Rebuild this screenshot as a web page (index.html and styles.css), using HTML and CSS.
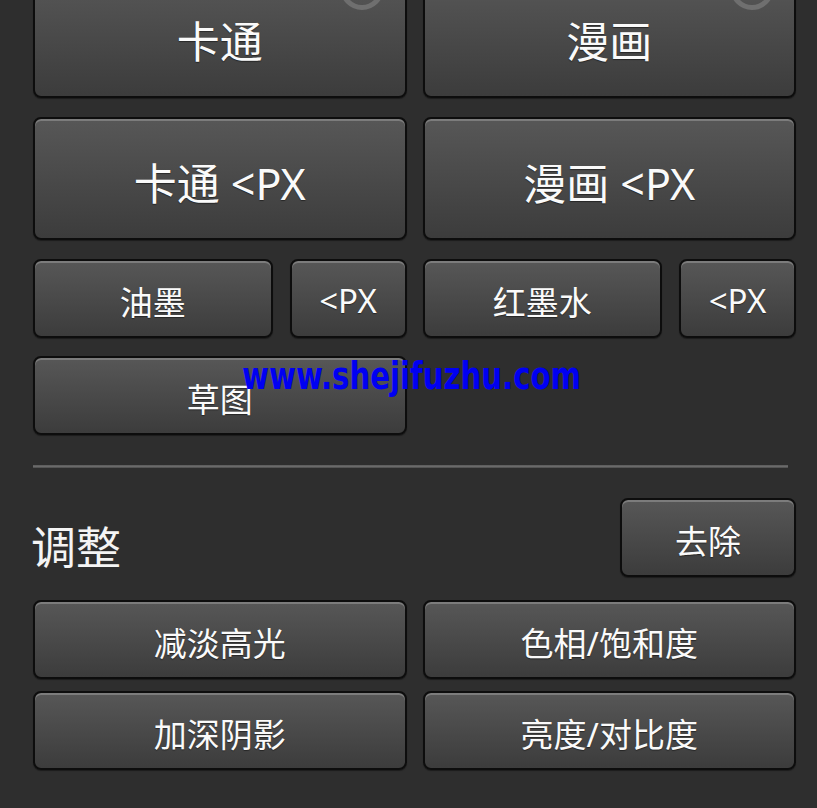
FILE: index.html
```html
<!DOCTYPE html>
<html lang="zh-CN">
<head>
<meta charset="utf-8">
<title>滤镜面板</title>
<link rel="stylesheet" href="styles.css">
</head>
<body>
<div class="panel">
  <div class="grid big">
    <button class="btn xl">卡通<svg class="ring" width="60" height="50" viewBox="0 0 60 50"><circle cx="30" cy="14" r="19.5" fill="none" stroke="#6f6f6f" stroke-width="5"/></svg></button>
    <button class="btn xl">漫画<svg class="ring" width="60" height="50" viewBox="0 0 60 50"><circle cx="30" cy="14" r="19.5" fill="none" stroke="#6f6f6f" stroke-width="5"/></svg></button>
    <button class="btn xl">卡通 &lt;PX</button>
    <button class="btn xl">漫画 &lt;PX</button>
  </div>
  <div class="grid small">
    <div class="pair">
      <button class="btn md">油墨</button>
      <button class="btn md">&lt;PX</button>
    </div>
    <div class="pair">
      <button class="btn md">红墨水</button>
      <button class="btn md">&lt;PX</button>
    </div>
    <button class="btn md">草图</button>
  </div>
  <hr class="divider">
  <div class="section-head">
    <h2 class="title">调整</h2>
    <button class="btn md remove">去除</button>
  </div>
  <div class="grid adjust">
    <button class="btn md">减淡高光</button>
    <button class="btn md">色相/饱和度</button>
    <button class="btn md">加深阴影</button>
    <button class="btn md">亮度/对比度</button>
  </div>
  <div class="watermark">www.shejifuzhu.com</div>
</div>
</body>
</html>
```

FILE: styles.css
```css
* { box-sizing: border-box; }
html, body {
  margin: 0;
  padding: 0;
  background: #2e2e2e;
  overflow: hidden;
}
body {
  width: 817px;
  height: 808px;
  font-family: "Noto Sans", "Noto Sans CJK SC", sans-serif;
}
.panel {
  position: relative;
  padding: 0 21px 0 33px;
  margin-top: -25px;
}
.grid {
  display: grid;
  grid-template-columns: 1fr 1fr;
  column-gap: 16px;
}
.big { row-gap: 19px; grid-auto-rows: 123px; }
.small { row-gap: 18px; grid-auto-rows: 79px; margin-top: 19px; }
.adjust { row-gap: 12px; grid-auto-rows: 79px; margin-top: 23px; }
.pair {
  display: grid;
  grid-template-columns: 1fr 117px;
  column-gap: 17px;
}
.btn {
  position: relative;
  overflow: hidden;
  margin: 0;
  padding: 0;
  border: 2px solid #0d0d0d;
  border-radius: 8px;
  background: linear-gradient(#575757, #3c3c3c);
  box-shadow: inset 0 2px 0 #7c7c7c, 0 1px 1px rgba(0,0,0,0.4);
  color: #fafafa;
  font-family: "Noto Sans", "Noto Sans CJK SC", sans-serif;
  text-shadow: 0 1px 1px rgba(0,0,0,0.45);
  display: flex;
  align-items: center;
  justify-content: center;
  padding-top: 5px;
  white-space: nowrap;
}
.xl { font-size: 43px; }
.md { font-size: 33px; padding-top: 4px; }
.ring {
  position: absolute;
  left: 297px;
  top: -3px;
}
.divider {
  border: 0;
  height: 3px;
  background: linear-gradient(#595959, #6a6a6a, #4a4a4a);
  margin: 30px 8px 0 0;
}
.section-head {
  display: flex;
  justify-content: space-between;
  align-items: flex-end;
  margin-top: 30px;
}
.title {
  margin: 0 0 2px -2px;
  font-weight: normal;
  font-size: 45px;
  color: #f4f4f4;
  line-height: 1.3;
  font-family: "Noto Sans CJK SC", sans-serif;
}
.remove {
  width: 176px;
  height: 79px;
}
.watermark {
  position: absolute;
  left: 242px;
  top: 384px;
  font-family: "DejaVu Sans", sans-serif;
  font-weight: bold;
  font-size: 29.2px;
  color: #0000f2;
  line-height: 1;
  transform: scaleY(1.25);
  transform-origin: left top;
  white-space: nowrap;
}
```
